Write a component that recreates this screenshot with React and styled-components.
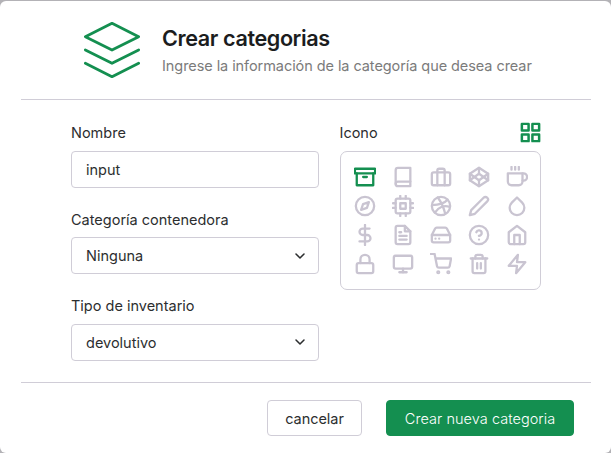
import React from 'react';
import styled, { createGlobalStyle } from 'styled-components';
import {
  FiArchive, FiBook, FiBriefcase, FiCodepen, FiCoffee, FiCompass, FiCpu, FiDribbble,
  FiEdit2, FiDroplet, FiDollarSign, FiFileText, FiHardDrive, FiHelpCircle, FiHome,
  FiLock, FiMonitor, FiShoppingCart, FiTrash2, FiZap, FiGrid, FiLayers, FiChevronDown,
} from 'react-icons/fi';

const GlobalStyle = createGlobalStyle`
  * { box-sizing: border-box; }
  body { margin: 0; background: #b3b2b6; font-family: Inter, sans-serif; color: #2c2e2f; }
  button, input { font: inherit; color: inherit; }
`;

const Backdrop = styled.div`
  height: 453px;
  padding-top: 1px;
  overflow: hidden;
`;

const Dialog = styled.main`
  display: flex;
  flex-direction: column;
  height: 452px;
  padding: 0 20px 0 21px;
  background: #fff;
  border-radius: 6px;
`;

const Header = styled.header`
  display: flex;
  height: 99px;
  padding: 17px 0 0 59px;
  border-bottom: 1px solid #d0cdd7;
  color: #148f50;
`;

const Heading = styled.div`
  display: flex;
  flex-direction: column;
  margin-left: 18px;
  padding-top: 7px;
`;

const Title = styled.h1`
  margin: 0;
  font-size: 21.6px;
  line-height: 27px;
  font-weight: 600;
  letter-spacing: -0.4px;
  color: #1b1d1e;
`;

const Subtitle = styled.p`
  margin: 4px 0 0;
  font-size: 14.5px;
  line-height: 20px;
  letter-spacing: -0.07px;
  color: #7b7b7b;
`;

const Body = styled.section`
  display: flex;
  align-items: flex-start;
  gap: 21px;
  height: 283px;
  padding: 23px 0 0 50px;
  border-bottom: 1px solid #d0cdd7;
`;

const Fields = styled.div`
  display: flex;
  flex-direction: column;
  gap: 22px;
  width: 247.5px;
`;

const Field = styled.label`
  display: flex;
  flex-direction: column;
  gap: 7.6px;
`;

const Label = styled.span`
  font-size: 14.5px;
  line-height: 20px;
`;

const TextInput = styled.input`
  width: 100%;
  height: 37px;
  padding: 0 14px;
  border: 1px solid #d0cdd7;
  border-radius: 4px;
  background: #fff;
  font-size: 14.5px;
  outline: none;
`;

const Select = styled.button`
  display: flex;
  align-items: center;
  justify-content: space-between;
  width: 100%;
  height: 37px;
  padding: 0 10px 0 14px;
  border: 1px solid #d0cdd7;
  border-radius: 4px;
  background: #fff;
  font-size: 14.5px;
`;

const IconPicker = styled.div`
  display: flex;
  flex-direction: column;
  width: 201.5px;
`;

const PickerHeader = styled.div`
  display: flex;
  align-items: center;
  justify-content: space-between;
  height: 20px;
  margin-bottom: 7.5px;

  svg { color: #148f50; margin: -1px -1px 0 0; }
`;

const IconGrid = styled.div`
  display: grid;
  grid-template-columns: repeat(5, 38px);
  grid-auto-rows: 29px;
  height: 139px;
  padding: 10.6px 0 0 5px;
  border: 1px solid #d0cdd7;
  border-radius: 7px;
`;

const IconOption = styled.button`
  display: flex;
  align-items: center;
  justify-content: center;
  padding: 0;
  border: 0;
  background: none;
  color: ${({ $selected }) => ($selected ? '#148f50' : '#c9c4d1')};
`;

const Footer = styled.footer`
  display: flex;
  justify-content: flex-end;
  gap: 24px;
  padding: 17px 17px 0 0;
`;

const Button = styled.button`
  width: ${({ $primary }) => ($primary ? '188px' : '95px')};
  height: 36px;
  padding: 0;
  border: 1px solid ${({ $primary }) => ($primary ? '#148f50' : '#d0cdd7')};
  border-radius: 4px;
  background: ${({ $primary }) => ($primary ? '#148f50' : '#fff')};
  color: ${({ $primary }) => ($primary ? '#fff' : '#2c2e2f')};
  font-size: 14.5px;
  font-weight: ${({ $primary }) => ($primary ? 300 : 400)};
  letter-spacing: ${({ $primary }) => ($primary ? '0.05px' : '-0.05px')};
`;

const icons = [
  ['archivo', FiArchive], ['libro', FiBook], ['maletín', FiBriefcase], ['cubo', FiCodepen], ['café', FiCoffee],
  ['brújula', FiCompass], ['procesador', FiCpu], ['balón', FiDribbble], ['lápiz', FiEdit2], ['gota', FiDroplet],
  ['dinero', FiDollarSign], ['documento', FiFileText], ['disco', FiHardDrive], ['ayuda', FiHelpCircle], ['casa', FiHome],
  ['candado', FiLock], ['monitor', FiMonitor], ['carrito', FiShoppingCart], ['papelera', FiTrash2], ['rayo', FiZap],
];

export default function App() {
  return (
    <Backdrop>
      <GlobalStyle />
      <Dialog>
        <Header>
          <FiLayers size={64} strokeWidth={1.05} />
          <Heading>
            <Title>Crear categorias</Title>
            <Subtitle>Ingrese la información de la categoría que desea crear</Subtitle>
          </Heading>
        </Header>
        <Body>
          <Fields>
            <Field>
              <Label>Nombre</Label>
              <TextInput defaultValue="input" />
            </Field>
            <Field>
              <Label>Categoría contenedora</Label>
              <Select type="button">Ninguna<FiChevronDown size={16} strokeWidth={2.3} /></Select>
            </Field>
            <Field>
              <Label>Tipo de inventario</Label>
              <Select type="button">devolutivo<FiChevronDown size={16} strokeWidth={2.3} /></Select>
            </Field>
          </Fields>
          <IconPicker>
            <PickerHeader>
              <Label>Icono</Label>
              <FiGrid size={23} strokeWidth={2.6} />
            </PickerHeader>
            <IconGrid>
              {icons.map(([name, Icon], i) => (
                <IconOption key={name} type="button" aria-label={name} $selected={i === 0}>
                  <Icon size={22} strokeWidth={2.5} />
                </IconOption>
              ))}
            </IconGrid>
          </IconPicker>
        </Body>
        <Footer>
          <Button type="button">cancelar</Button>
          <Button type="button" $primary>Crear nueva categoria</Button>
        </Footer>
      </Dialog>
    </Backdrop>
  );
}
